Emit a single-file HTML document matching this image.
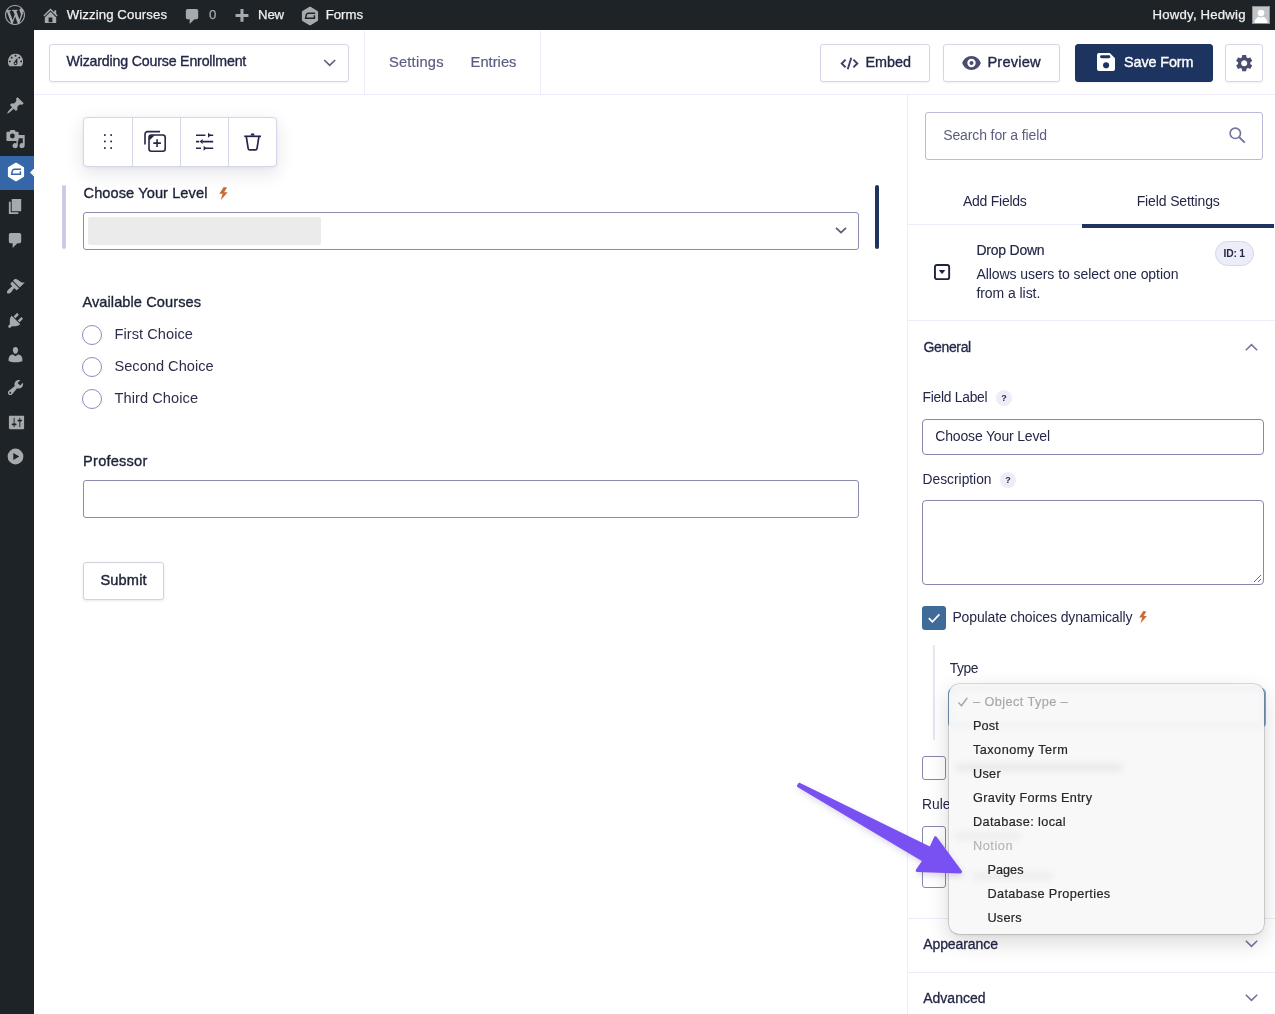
<!DOCTYPE html>
<html lang="en">
<head>
<meta charset="utf-8">
<title>Wizarding Course Enrollment – Gravity Forms</title>
<style>
*{box-sizing:border-box;margin:0;padding:0}
html,body{width:1275px;height:1014px;overflow:hidden;background:#fff}
.t{will-change:transform}
.m{-webkit-text-stroke:.35px}
.m2{-webkit-text-stroke:.2px}
body{font-family:"Liberation Sans",Arial,sans-serif;color:#242748;font-size:14px;position:relative}
.abs{position:absolute}
.t{position:absolute;white-space:nowrap;line-height:1}
/* admin bar */
#adminbar{position:absolute;left:0;top:0;width:1275px;height:30px;background:#1d2327;color:#f0f0f1;z-index:5}
#adminbar .t{font-size:13.2px;color:#f0f0f1;top:7.600px;-webkit-text-stroke:.25px}
/* side menu */
#sidemenu{position:absolute;left:0;top:30px;width:34px;height:984px;background:#1d2327;z-index:4}
#sidemenu .active{position:absolute;left:0;top:126px;width:34px;height:34px;background:#3566a7}
#sidemenu svg{position:absolute}
#toolbar svg{z-index:2}
#toolbar .t{z-index:2}
/* toolbar */
#toolbar{position:absolute;left:34px;top:30px;width:1241px;height:65px;background:#fff;border-bottom:1px solid #ecedf8}
.vsep{position:absolute;top:0;width:1px;height:64px;background:#ecedf8}
.btn{position:absolute;top:14px;height:38px;border:1px solid #d5d7e9;border-radius:3px;background:#fff;box-shadow:0 1px 2px rgba(18,25,97,.06)}
/* editor */
#editor{position:absolute;left:34px;top:95px;width:873px;height:919px;background:#fff}
/* panel */
#panel{position:absolute;left:907px;top:95px;width:368px;height:919px;background:#fff}
#panel .lbl{font-size:14px;line-height:16px;color:#242748}
.q{position:absolute;width:16px;height:16px;border-radius:50%;background:#ecedf8;color:#242748;font-size:9px;font-weight:bold;text-align:center;line-height:16.500px;will-change:transform}
.hline{position:absolute;height:1px;background:#ecedf8}
.inp{position:absolute;border:1px solid #9092b2;border-radius:3px;background:#fff}
</style>
</head>
<body>

<!-- ============ ADMIN BAR ============ -->
<div id="adminbar">
  <svg class="abs" style="left:5px;top:5px" width="20" height="20" viewBox="0 0 20 20"><path fill="#a7aaad" d="M20 10c0-5.51-4.49-10-10-10C4.48 0 0 4.49 0 10c0 5.52 4.48 10 10 10 5.51 0 10-4.48 10-10zM7.78 15.37L4.37 6.22c.55-.02 1.17-.08 1.17-.08.5-.06.44-1.13-.06-1.11 0 0-1.45.11-2.37.11-.18 0-.37 0-.58-.01C4.12 2.69 6.87 1.11 10 1.11c2.33 0 4.45.87 6.05 2.34-.68-.11-1.65.39-1.65 1.58 0 .74.45 1.36.9 2.1.35.61.55 1.36.55 2.46 0 1.49-1.4 5-1.4 5l-3.03-8.37c.54-.02.82-.17.82-.17.5-.05.44-1.25-.06-1.22 0 0-1.44.12-2.38.12-.87 0-2.33-.12-2.33-.12-.5-.03-.56 1.2-.06 1.22l.92.08 1.26 3.41zM17.41 10c.24-.64.74-1.87.43-4.25.7 1.29 1.05 2.71 1.05 4.25 0 3.29-1.73 6.24-4.4 7.78.97-2.59 1.94-5.2 2.92-7.78zM6.1 18.09C3.12 16.650 1.11 13.53 1.11 10c0-1.3.23-2.48.72-3.59C3.25 10.3 4.67 14.2 6.1 18.09zm4.03-6.63l2.58 6.98c-.86.29-1.76.45-2.71.45-.79 0-1.57-.11-2.29-.33.81-2.38 1.62-4.74 2.42-7.1z"/></svg>
  <svg class="abs" style="left:40.5px;top:5.6px" width="19" height="19" viewBox="0 0 20 20"><path fill="#a7aaad" d="M16 8.5l1.53 1.53-1.06 1.06L10 4.620l-6.47 6.47-1.06-1.06L10 2.5l4 4v-2h2v4zm-6-2.46l6 5.99V18H4v-5.970zM12 17v-5H8v5h4z"/></svg>
  <svg class="abs" style="left:182.6px;top:6.6px" width="19" height="19" viewBox="0 0 20 20"><path fill="#a7aaad" d="M5 2h9c1.1 0 2 .9 2 2v7c0 1.1-.9 2-2 2h-2l-5 5v-5H5c-1.1 0-2-.9-2-2V4c0-1.100.9-2 2-2z"/></svg>
  <svg class="abs" style="left:232px;top:7px" width="19" height="19" viewBox="0 0 20 20"><path fill="#a7aaad" d="M17.300 7.300v3.100h-5.200v5.200H8.900v-5.200H3.700V7.300h5.200V2.100h3.200v5.200z"/></svg>
  <svg class="abs" style="left:299.8px;top:4.6px;position:absolute" width="20" height="22" viewBox="-10 -11 20 22"><path d="M0 -8.200L7 -4.100V4.100L0 8.200L-7 4.100V-4.100Z" fill="#a7aaad" stroke="#a7aaad" stroke-width="2.200" stroke-linejoin="round"/><path d="M5.100 -2.700H-1.500Q-3.300 -2.700 -3.700 -1L-4.400 2.200H4.400V-.7" fill="none" stroke="#1d2327" stroke-width="1.450"/></svg>
  <div class="abs" style="left:1252px;top:6px;width:18px;height:18px;background:#c3c4c7;border:1px solid #8c8f94"></div>
  <svg class="abs" style="left:1253px;top:7px" width="16" height="16" viewBox="0 0 16 16"><circle cx="8" cy="6" r="3.300" fill="#fff"/><path d="M1.500 16c.2-3.700 2.400-5.700 4.300-6.200.7.500 1.400.800 2.200.8s1.500-.3 2.200-.8c1.900.5 4.100 2.500 4.300 6.200z" fill="#fff"/></svg>

  <span class="t" style="letter-spacing:0.090px;text-indent:0.80px;left:66px">Wizzing Courses</span>
  <span class="t" style="letter-spacing:0.000px;text-indent:0.00px;left:209px;color:#a7aaad">0</span>
  <span class="t" style="letter-spacing:-0.245px;text-indent:0.11px;left:258px">New</span>
  <span class="t" style="letter-spacing:0.006px;text-indent:0.71px;left:325px">Forms</span>
  <span class="t" style="letter-spacing:0.188px;text-indent:0.61px;left:1152px">Howdy, Hedwig</span>
</div>

<!-- ============ SIDE MENU ============ -->
<div id="sidemenu">
  <div class="active"></div>
  <svg style="left:6.3px;top:20.5px" width="19" height="19" viewBox="0 0 20 20"><path fill="#a7aaad"  d="M3.760 16h12.480A7.998 7.998 0 0 0 10 3a7.998 7.998 0 0 0-6.240 13zM10 4c.55 0 1 .45 1 1s-.45 1-1 1-1-.45-1-1 .45-1 1-1zM6 6c.55 0 1 .45 1 1s-.45 1-1 1-1-.45-1-1 .45-1 1-1zm8 0c.55 0 1 .45 1 1s-.45 1-1 1-1-.45-1-1 .45-1 1-1zm-5.370 5.550L12 7v6c0 1.100-.9 2-2 2s-2-.9-2-2c0-.57.24-1.080.63-1.450zM4 10c.55 0 1 .45 1 1s-.45 1-1 1-1-.45-1-1 .45-1 1-1zm12 0c.55 0 1 .45 1 1s-.45 1-1 1-1-.45-1-1 .45-1 1-1zm-5 3c0-.55-.45-1-1-1s-1 .45-1 1 .45 1 1 1 1-.45 1-1z"/></svg>
  <svg style="left:5.9px;top:65.5px" width="19" height="19" viewBox="0 0 20 20"><path fill="#a7aaad"  d="M10.440 3.020l1.820-1.820 6.360 6.350-1.830 1.820c-1.050-.68-2.480-.57-3.410.36l-.75.75c-.92.93-1.040 2.350-.35 3.410l-1.830 1.820-2.410-2.410-2.800 2.790c-.42.42-3.380 2.710-3.800 2.290s1.860-3.390 2.280-3.810l2.790-2.790L4.100 9.360l1.830-1.820c1.050.69 2.480.57 3.400-.36l.75-.75c.93-.92 1.050-2.350.36-3.410z"/></svg>
  <svg style="left:5px;top:98px" width="22" height="22" viewBox="5 128 22 22"><path fill="#a7aaad" fill-rule="evenodd" d="M7.300 131.800H9.600L10.600 129.900H14.700L15.700 131.800H17.700a.9.9 0 0 1 .9.900V140.100a.9.900 0 0 1-.9.900H7.300a.9.900 0 0 1-.9-.9V132.700a.9.900 0 0 1 .9-.9zM12.400 133.600a2.400 2.400 0 1 0 0 4.800 2.400 2.400 0 0 0 0-4.800zM18.600 135H24.700V145.600a2.600 2.500 0 1 1-1.900-2.400V138.200H18.600zM17.800 141V145.600a2.600 2.500 0 1 1-1.400-2.200V141z"/></svg>
  <svg class="abs" style="left:6px;top:130.7px;position:absolute" width="20" height="22" viewBox="-10 -11 20 22"><path d="M0 -8.200L7 -4.100V4.100L0 8.200L-7 4.100V-4.100Z" fill="#fff" stroke="#fff" stroke-width="2.200" stroke-linejoin="round"/><path d="M5.100 -2.700H-1.500Q-3.300 -2.700 -3.700 -1L-4.400 2.200H4.400V-.7" fill="none" stroke="#3566a7" stroke-width="1.450"/></svg>
  <svg style="left:29.800px;top:138.400px" width="4.200" height="8.800" viewBox="0 0 5 10" preserveAspectRatio="none"><path fill="#f6f6f7" d="M5 0v10L0 5z"/></svg>
  <svg style="left:5.9px;top:167.3px" width="19" height="19" viewBox="0 0 20 20"><path fill="#a7aaad"  d="M6 15V2h10v13H6zm-1 1h8v2H3V5h2v11z"/></svg>
  <svg style="left:5.9px;top:201.1px" width="19" height="19" viewBox="0 0 20 20"><path fill="#a7aaad"  d="M5 2h9c1.100 0 2 .9 2 2v7c0 1.100-.9 2-2 2h-2l-5 5v-5H5c-1.100 0-2-.9-2-2V4c0-1.100.9-2 2-2z"/></svg>
  <svg style="left:5.9px;top:246.5px" width="19" height="19" viewBox="0 0 20 20"><path fill="#a7aaad"  d="M14.480 11.060L7.410 3.990l1.500-1.500c.5-.56 2.300-.47 3.510.32 1.210.8 1.430 1.280 2.910 2.100 1.180.64 2.450 1.260 4.450.85zm-.71.71L6.700 4.700 4.930 6.470c-.39.39-.39 1.020 0 1.410l1.060 1.060c.39.39.39 1.030 0 1.420-.6.6-1.430 1.110-2.210 1.690-.35.26-.7.53-1.010.84C1.430 14.230.4 16.080 1.400 17.070c.99 1 2.840-.03 4.180-1.360.31-.31.58-.66.85-1.020.57-.78 1.080-1.610 1.690-2.210.39-.39 1.020-.39 1.410 0l1.060 1.060c.39.39 1.020.39 1.410 0z"/></svg>
  <svg style="left:6.2px;top:280.8px" width="19" height="19" viewBox="0 0 20 20"><path fill="#a7aaad"  d="M13.110 4.360L9.870 7.600 8 5.730l3.240-3.240c.35-.34 1.050-.2 1.560.32.52.51.66 1.210.31 1.550zm-8 1.770l.91-1.120 9.010 9.010-1.190.84c-.71.71-2.630 1.160-3.820 1.160H6.140L4.900 17.260c-.59.59-1.540.59-2.120 0-.59-.58-.59-1.530 0-2.120l1.240-1.240v-3.880c0-1.130.4-3.190 1.090-3.890zm7.260 3.970l3.240-3.240c.34-.35 1.040-.21 1.550.31.52.51.66 1.210.31 1.550l-3.240 3.250z"/></svg>
  <svg style="left:6.2px;top:314.5px" width="19" height="19" viewBox="0 0 20 20"><path fill="#a7aaad"  d="M10 9.250c-2.270 0-2.730-3.440-2.730-3.440C7 4.020 7.820 2 9.970 2c2.160 0 2.980 2.020 2.710 3.810 0 0-.41 3.440-2.680 3.440zm0 2.570L12.720 10c2.390 0 4.520 2.330 4.520 4.530v2.490s-3.650 1.130-7.240 1.130c-3.650 0-7.240-1.130-7.240-1.130v-2.490c0-2.250 1.940-4.480 4.470-4.480z"/></svg>
  <svg style="left:5.9px;top:348.3px" width="19" height="19" viewBox="0 0 20 20"><path fill="#a7aaad"  d="M16.680 9.770c-1.340 1.340-3.300 1.670-4.950.99l-5.410 6.520c-.99.99-2.590.99-3.580 0s-.99-2.590 0-3.570l6.520-5.420c-.68-1.650-.35-3.610.99-4.950 1.280-1.280 3.120-1.620 4.720-1.060l-2.890 2.890 2.820 2.820 2.860-2.870c.53 1.580.18 3.390-1.080 4.650zM3.810 16.210c.4.39 1.040.39 1.430 0 .4-.4.4-1.040 0-1.430-.39-.4-1.030-.4-1.430 0-.39.39-.39 1.030 0 1.430z"/></svg>
  <svg style="left:6.5px;top:382.5px" width="19" height="19" viewBox="0 0 20 20"><path fill="#a7aaad"  d="M18 16V4c0-.55-.45-1-1-1H3c-.55 0-1 .45-1 1v12c0 .55.45 1 1 1h14c.55 0 1-.45 1-1zM8 11h1c.55 0 1 .45 1 1s-.45 1-1 1H8v1.500c0 .28-.22.5-.5.5s-.5-.22-.5-.5V13H6c-.55 0-1-.45-1-1s.45-1 1-1h1V5.500c0-.28.22-.5.5-.5s.5.220.5.500V11zm5-2h-1c-.55 0-1-.45-1-1s.45-1 1-1h1V5.500c0-.28.22-.5.5-.5s.5.220.5.500V7h1c.55 0 1 .45 1 1s-.45 1-1 1h-1v5.500c0 .28-.22.5-.5.5s-.5-.22-.5-.5V9z"/></svg>
  <svg style="left:6.2px;top:416.5px" width="19" height="19" viewBox="0 0 20 20"><path fill="#a7aaad" fill-rule="evenodd" d="M10 1.700a8.300 8.300 0 1 0 0 16.600 8.300 8.300 0 0 0 0-16.600zM7.700 6.200l6.300 3.800-6.300 3.800z"/></svg>
</div>

<!-- ============ TOOLBAR ============ -->
<div id="toolbar">
  <svg class="abs" style="left:288.100px;top:28.300px" width="15.400" height="9.900" viewBox="0 0 14 9"><path d="M2 1.800L7 6.600l5-4.800" fill="none" stroke="#5b5e80" stroke-width="1.500"/></svg>
  <svg class="abs" style="left:806px;top:27px" width="19" height="13" viewBox="0 0 19 13"><path d="M5.600 2.600L1.700 6.500l3.900 3.900M13.400 2.600l3.900 3.900-3.900 3.900M11.300 .8L7.700 12.200" fill="none" stroke="#3e4163" stroke-width="1.900"/></svg>
  <svg class="abs" style="left:928px;top:26px" width="19" height="14" viewBox="0 0 19 14"><path fill-rule="evenodd" fill="#4a4d70" d="M9.500 0C5 0 1.600 3 .2 7c1.400 4 4.800 7 9.300 7s7.900-3 9.300-7C17.400 3 14 0 9.500 0zm0 11.200a4.200 4.200 0 1 1 0-8.400 4.200 4.200 0 0 1 0 8.400zm0-6.200a2 2 0 1 0 0 4 2 2 0 0 0 0-4z"/></svg>
  <svg class="abs" style="left:1063px;top:23px" width="18" height="18" viewBox="0 0 18 18"><path fill-rule="evenodd" fill="#fff" d="M2 0h10.800L18 5.200V16a2 2 0 0 1-2 2H2a2 2 0 0 1-2-2V2a2 2 0 0 1 2-2zm2.500 2.300a1.450 1.450 0 0 0 0 2.900h7.400a1.450 1.450 0 0 0 0-2.900zM9.100 9.300a3.050 3.050 0 1 0 0 6.100 3.050 3.050 0 0 0 0-6.100z"/></svg>
  <svg class="abs" style="left:1199.800px;top:23.400px" width="20.400" height="20.400" viewBox="0 0 24 24"><path fill="#4a4d70" d="M19.140 12.940c.04-.3.060-.61.060-.94 0-.32-.02-.64-.07-.94l2.030-1.580a.49.490 0 0 0 .12-.61l-1.920-3.320a.488.488 0 0 0-.59-.22l-2.390.96c-.5-.38-1.030-.7-1.620-.94l-.36-2.540a.484.484 0 0 0-.48-.41h-3.840c-.24 0-.43.170-.47.410l-.36 2.540c-.59.240-1.130.57-1.620.94l-2.390-.96c-.22-.08-.47 0-.59.220L2.740 8.870c-.12.210-.08.470.12.610l2.030 1.580c-.05.3-.09.630-.09.940s.02.640.07.940l-2.030 1.580a.49.490 0 0 0-.12.610l1.920 3.320c.12.220.37.290.59.220l2.390-.96c.5.380 1.030.7 1.620.94l.36 2.540c.05.240.24.410.48.410h3.840c.24 0 .44-.17.470-.41l.36-2.540c.59-.24 1.130-.56 1.620-.94l2.390.96c.22.080.47 0 .59-.22l1.920-3.320c.12-.22.070-.47-.12-.61l-2.010-1.580zM12 15.600c-1.980 0-3.600-1.620-3.600-3.600s1.620-3.600 3.600-3.600 3.600 1.620 3.600 3.600-1.620 3.600-3.600 3.600z"/></svg>

  <div class="btn" style="left:15px;width:300px"></div>
  <span class="t m" style="letter-spacing:-0.181px;text-indent:0.50px;left:32px;top:24px;font-size:14.2px">Wizarding Course Enrollment</span>
  <div class="vsep" style="left:330px"></div>
  <span class="t m2" style="letter-spacing:0.217px;text-indent:0.91px;left:354px;top:25px;font-size:14.7px;color:#5b5e80">Settings</span>
  <span class="t m2" style="letter-spacing:0.014px;text-indent:0.61px;left:436px;top:25px;font-size:14.7px;color:#5b5e80">Entries</span>
  <div class="vsep" style="left:506px"></div>
  <div class="btn" style="left:786px;width:110px"></div>
  <span class="t m" style="letter-spacing:-0.002px;text-indent:0.41px;left:831px;top:25px;font-size:14.4px">Embed</span>
  <div class="btn" style="left:908.500px;width:117.500px"></div>
  <span class="t m" style="letter-spacing:0.158px;text-indent:0.41px;left:953px;top:25px;font-size:14.7px">Preview</span>
  <div class="btn" style="left:1041px;width:138px;background:#1d3461;border-color:#1d3461"></div>
  <span class="t m" style="letter-spacing:-0.109px;text-indent:0.00px;left:1090px;top:25px;font-size:14.4px;color:#fff">Save Form</span>
  <div class="btn" style="left:1191px;width:38px"></div>
</div>

<!-- ============ EDITOR ============ -->
<div id="editor">
  <!-- field toolbar (coords relative to editor: x-34, y-95) -->
  <div class="abs" style="left:49px;top:22px;width:194px;height:50px;border:1px solid #d5d7e9;border-radius:4px;background:#fff;box-shadow:0 6px 18px rgba(28,31,63,.12),0 1px 3px rgba(28,31,63,.05)">
    <div class="abs" style="left:48px;top:0;width:1px;height:48px;background:#d5d7e9"></div>
    <div class="abs" style="left:96px;top:0;width:1px;height:48px;background:#d5d7e9"></div>
    <div class="abs" style="left:144px;top:0;width:1px;height:48px;background:#d5d7e9"></div>
    <svg class="abs" style="left:0;top:-.3px" width="192" height="47" viewBox="0 0 192 47">
      <!-- drag dots (origin = 84,118 abs) -->
      <g fill="#242748">
        <rect x="20" y="16.2" width="1.7" height="1.7"/><rect x="26.3" y="16.2" width="1.7" height="1.7"/>
        <rect x="20" y="22.6" width="1.7" height="1.7"/><rect x="26.3" y="22.6" width="1.7" height="1.7"/>
        <rect x="20" y="29.2" width="1.7" height="1.7"/><rect x="26.3" y="29.2" width="1.7" height="1.7"/>
      </g>
      <!-- duplicate -->
      <g fill="none" stroke="#242748" stroke-width="1.6" stroke-linecap="butt">
        <path d="M61 26.5V16.2a2.6 2.6 0 0 1 2.6-2.6H76"/>
        <rect x="65" y="17" width="16.2" height="16.2" rx="2.4"/>
        <path d="M73.1 21.3v7.6M69.3 25.1h7.6"/>
      </g>
      <path d="M65.3 22.5v-3.2a2 2 0 0 1 2-2h3.5z" fill="#242748"/>
      <!-- sliders -->
      <g stroke="#242748" stroke-width="1.6" fill="none">
        <path d="M112 17.3h9.4M126 17.3h3.2"/>
        <path d="M112 23.6h3.2M118.4 23.6h10.8"/>
        <path d="M112 30.2h5M121.6 30.2h7.6"/>
      </g>
      <g fill="#242748">
        <path d="M124 14.8l3 2.5-3 2.5z"/>
        <path d="M118.6 21.1v5l-3-2.5z"/>
        <path d="M119.6 27.7l3 2.5-3 2.5z"/>
      </g>
      <!-- trash -->
      <g fill="none" stroke="#242748" stroke-width="1.7" stroke-linejoin="round">
        <path d="M160.2 18.3h16.8"/>
        <path d="M162.3 18.6l1.9 12a1.6 1.6 0 0 0 1.6 1.3h5.6a1.6 1.6 0 0 0 1.6-1.3l1.9-12"/>
      </g>
      <path d="M166.6 17.6a2 2.3 0 0 1 4 0z" fill="#242748"/>
    </svg>
  </div>

  <!-- selected field -->
  <div class="abs" style="left:28px;top:90px;width:4px;height:64px;border-radius:2px;background:#cbcce4"></div>
  <div class="abs" style="left:840.600px;top:90.400px;width:4.600px;height:63.600px;border-radius:2.500px;background:#1d3461"></div>
  <span class="t" id="lblLevel" style="letter-spacing:0.086px;text-indent:0.50px;left:49px;top:90px;font-size:14.6px;line-height:17px;color:#1c2335;-webkit-text-stroke:.35px #1c2335">Choose Your Level</span>
  <svg class="abs" style="left:184.300px;top:91.500px" width="11" height="13.300" viewBox="0 0 10 14" preserveAspectRatio="none"><path d="M5.2 0L1.2 7.2h3L2.4 14 8.8 5.6H5.6L8.2 0.6z" fill="#cb6a33"/></svg>
  <div class="inp" style="left:49px;top:117px;width:776px;height:38px;border-color:#8b8db0"></div>
  <div class="abs" style="left:54px;top:122px;width:233px;height:28px;border-radius:2px;background:#ebebeb"></div>
  <svg class="abs" style="left:800px;top:131px" width="14" height="9" viewBox="0 0 14 9"><path d="M2 1.8L7 6.6l5-4.8" fill="none" stroke="#5b5e70" stroke-width="1.8"/></svg>

  <!-- radio field -->
  <span class="t" id="lblAvail" style="letter-spacing:0.078px;text-indent:0.41px;left:48px;top:199px;font-size:14.6px;line-height:17px;color:#1c2335;-webkit-text-stroke:.35px #1c2335">Available Courses</span>
  <div class="abs" style="left:48px;top:230px;width:20px;height:20px;border:1px solid #8b8db8;border-radius:50%"></div>
  <div class="abs" style="left:48px;top:262px;width:20px;height:20px;border:1px solid #8b8db8;border-radius:50%"></div>
  <div class="abs" style="left:48px;top:294px;width:20px;height:20px;border:1px solid #8b8db8;border-radius:50%"></div>
  <span class="t" id="c1" style="letter-spacing:0.049px;text-indent:0.50px;left:80px;top:231px;font-size:14.6px;line-height:17px;color:#2b2f4a">First Choice</span>
  <span class="t" id="c2" style="letter-spacing:0.010px;text-indent:0.50px;left:80px;top:263px;font-size:14.6px;line-height:17px;color:#2b2f4a">Second Choice</span>
  <span class="t" id="c3" style="letter-spacing:0.070px;text-indent:0.50px;left:80px;top:295px;font-size:14.6px;line-height:17px;color:#2b2f4a">Third Choice</span>

  <!-- professor -->
  <span class="t" id="lblProf" style="letter-spacing:0.218px;text-indent:0.11px;left:49px;top:358px;font-size:14.6px;line-height:17px;color:#1c2335;-webkit-text-stroke:.35px #1c2335">Professor</span>
  <div class="inp" style="left:49px;top:385px;width:776px;height:38px;border-color:#8b8db0"></div>

  <!-- submit -->
  <div class="abs" style="left:49px;top:467px;width:81px;height:38px;border:1px solid #d0d3dc;border-radius:3px;background:#fff;box-shadow:0 1px 3px rgba(20,25,50,.10)"></div>
  <span class="t" id="lblSubmit" style="letter-spacing:0.156px;text-indent:0.41px;left:66px;top:477px;font-size:14.6px;line-height:17px;color:#1c2335;-webkit-text-stroke:.4px #1c2335">Submit</span>
</div>

<!-- ============ PANEL ============ -->
<div id="panel">
  <div class="abs" style="left:0;top:0;width:1px;height:919px;background:#ecedf8"></div>
  <!-- search -->
  <div class="inp" style="left:18px;top:17px;width:338px;height:48px;border-color:#b9bbd6;border-radius:3px"></div>
  <span class="t lbl" id="pSearch" style="letter-spacing:-0.120px;text-indent:0.21px;left:36px;top:32px;color:#5b5e80">Search for a field</span>
  <svg class="abs" style="left:320.800px;top:31.100px" width="19" height="19" viewBox="0 0 19 19"><circle cx="7.300" cy="7.300" r="5.200" fill="none" stroke="#72759c" stroke-width="1.650"/><path d="M11.200 11.200l5.600 5.400" stroke="#72759c" stroke-width="1.900" fill="none"/></svg>
  <!-- tabs -->
  <span class="t lbl" id="pAdd" style="letter-spacing:-0.262px;text-indent:0.00px;left:56px;top:98px">Add Fields</span>
  <span class="t lbl" id="pFS" style="letter-spacing:-0.133px;text-indent:0.71px;left:229px;top:98px">Field Settings</span>
  <div class="hline" style="left:1px;top:129px;width:367px"></div>
  <div class="abs" style="left:175px;top:129px;width:192px;height:4px;background:#1d3461"></div>
  <!-- field info -->
  <svg class="abs" style="left:26.900px;top:168.800px" width="17" height="17" viewBox="0 0 17 17"><rect x=".950" y=".950" width="14.200" height="14.200" rx="2" fill="none" stroke="#1f2240" stroke-width="1.900"/><path d="M5.500 6.500h5.100L8.050 9.500z" fill="#1f2240" stroke="#1f2240" stroke-width="1" stroke-linejoin="round"/></svg>
  <span class="t lbl" id="pDD" style="letter-spacing:-0.229px;text-indent:0.41px;left:69px;top:147px;-webkit-text-stroke:.2px #242748">Drop Down</span>
  <span class="t lbl" id="pD1" style="letter-spacing:-0.056px;text-indent:0.41px;left:69px;top:171px">Allows users to select one option</span>
  <span class="t lbl" id="pD2" style="letter-spacing:-0.062px;text-indent:0.41px;left:69px;top:190px">from a list.</span>
  <div class="abs" style="left:308px;top:146px;width:39px;height:25px;border-radius:13px;background:#ecedf8;border:1px solid #d5d7e9"></div>
  <span class="t" id="pID" style="letter-spacing:-0.207px;text-indent:0.50px;left:316px;top:154.400px;font-size:10.3px;font-weight:bold;color:#242748">ID: 1</span>
  <div class="hline" style="left:1px;top:225px;width:367px"></div>
  <!-- General -->
  <span class="t lbl" id="pGen" style="letter-spacing:-0.352px;text-indent:0.50px;font-size:14px;left:16px;top:244px;-webkit-text-stroke:.3px #242748">General</span>
  <svg class="abs" style="left:337px;top:247px" width="15" height="10" viewBox="0 0 15 10"><path d="M1.8 8.2L7.5 2.6l5.7 5.6" fill="none" stroke="#7073a0" stroke-width="1.550"/></svg>
  <!-- Field label -->
  <span class="t lbl" id="pFL" style="letter-spacing:-0.250px;text-indent:0.61px;font-size:13.8px;left:15px;top:295px">Field Label</span>
  <div class="q" style="left:89px;top:295px">?</div>
  <div class="inp" style="left:15px;top:324px;width:342px;height:36px;border-color:#8688ab;border-radius:4px"></div>
  <span class="t lbl" id="pCYL" style="letter-spacing:-0.178px;text-indent:0.30px;left:28px;top:333px">Choose Your Level</span>
  <!-- Description -->
  <span class="t lbl" id="pDesc" style="letter-spacing:-0.012px;text-indent:0.61px;font-size:13.8px;left:15px;top:377px">Description</span>
  <div class="q" style="left:93px;top:377px">?</div>
  <div class="inp" style="left:15px;top:405px;width:342px;height:85px;border-color:#8688ab;border-radius:4px"></div>
  <svg class="abs" style="left:346px;top:479px" width="9" height="9" viewBox="0 0 9 9"><path d="M8 1L1 8M8 5L5 8" stroke="#6d6d6d" stroke-width="1" fill="none"/></svg>
  <!-- checkbox -->
  <div class="abs" style="left:15px;top:511px;width:24px;height:24px;border-radius:3px;background:#3e6b9a"></div>
  <svg class="abs" style="left:15px;top:511px" width="24" height="24" viewBox="0 0 24 24"><path d="M6.8 12.2l3.6 3.6 7-7.4" fill="none" stroke="#fff" stroke-width="1.8"/></svg>
  <span class="t lbl" id="pPop" style="letter-spacing:-0.135px;text-indent:0.41px;left:45px;top:514px">Populate choices dynamically</span>
  <svg class="abs" style="left:231.200px;top:516.400px" width="10.100" height="12.600" viewBox="0 0 10 14" preserveAspectRatio="none"><path d="M5.2 0L1.2 7.2h3L2.4 14 8.8 5.6H5.6L8.2 0.6z" fill="#cb6a33"/></svg>
  <!-- type -->
  <div class="abs" style="left:26px;top:550px;width:2px;height:95px;background:#e6e7f4"></div>
  <span class="t lbl" id="pType" style="letter-spacing:-0.407px;text-indent:0.80px;font-size:13.8px;left:42px;top:566px">Type</span>
  <div class="abs" style="left:40.500px;top:592.800px;width:318.200px;height:40.700px;border:2px solid #86a5cc;border-radius:5px;background:#fff"></div>
  <!-- hidden-ish things behind popup -->
  <div class="inp" style="left:15px;top:661px;width:24px;height:24px;border-color:#8688ab;border-radius:3px"></div>
  <span class="t lbl" id="pRule" style="font-size:13.8px;left:15px;top:702px">Rules</span>
  <div class="inp" style="left:15px;top:731px;width:24px;height:24px;border-color:#8688ab;border-radius:3px"></div>
  <div class="inp" style="left:15px;top:769px;width:24px;height:24px;border-color:#8688ab;border-radius:3px"></div>
  <div class="hline" style="left:1px;top:823px;width:367px"></div>
  <span class="t lbl" id="pApp" style="letter-spacing:-0.080px;text-indent:0.21px;font-size:14px;left:16px;top:841px;-webkit-text-stroke:.3px #242748">Appearance</span>
  <svg class="abs" style="left:337px;top:844px" width="15" height="10" viewBox="0 0 15 10"><path d="M1.8 1.8L7.5 7.4l5.7-5.6" fill="none" stroke="#7073a0" stroke-width="1.550"/></svg>
  <div class="hline" style="left:1px;top:877px;width:367px"></div>
  <span class="t lbl" id="pAdv" style="letter-spacing:0.003px;text-indent:0.21px;font-size:14px;left:16px;top:895px;-webkit-text-stroke:.3px #242748">Advanced</span>
  <svg class="abs" style="left:337px;top:898px" width="15" height="10" viewBox="0 0 15 10"><path d="M1.8 1.8L7.5 7.4l5.7-5.6" fill="none" stroke="#7073a0" stroke-width="1.550"/></svg>
</div>

<!-- ============ NATIVE SELECT POPUP ============ -->
<div id="popup" style="position:absolute;left:949px;top:684px;width:315px;height:250px;border-radius:10px;background:#f8f8f8;box-shadow:0 0 0 .5px rgba(0,0,0,.25),0 8px 22px rgba(0,0,0,.16),0 1px 4px rgba(0,0,0,.07);z-index:8;font-size:12.7px;color:#262626">
  
  <div class="abs" style="left:0;top:0;width:315px;height:250px;border-radius:10px;overflow:hidden">
    <div class="abs" style="left:-2px;top:3px;width:318px;height:40px;border-radius:6px;border:3px solid rgba(70,100,160,.07);filter:blur(3px)"></div>
    <div class="abs" style="left:6px;top:79px;width:168px;height:9px;border-radius:4px;background:rgba(60,65,110,.065);filter:blur(3px)"></div>
    <div class="abs" style="left:6px;top:148px;width:66px;height:9px;border-radius:4px;background:rgba(60,65,110,.055);filter:blur(3px)"></div>
    <div class="abs" style="left:24px;top:188px;width:80px;height:9px;border-radius:4px;background:rgba(60,65,110,.055);filter:blur(3px)"></div>
  </div>
  <svg class="abs" style="left:8px;top:11.500px" width="12" height="12" viewBox="0 0 12 12"><path d="M1.500 6.600l3 3.200L10.300 1.800" fill="none" stroke="#a9a9a9" stroke-width="1.500"/></svg>
  <span class="t m2" id="o0" style="letter-spacing:0.440px;text-indent:0.00px;left:24px;top:12px;color:#a8a8a8">– Object Type –</span>
  <span class="t m2" id="o1" style="letter-spacing:0.136px;text-indent:0.00px;left:24px;top:36px">Post</span>
  <span class="t m2" id="o2" style="letter-spacing:0.457px;text-indent:0.00px;left:24px;top:60px">Taxonomy Term</span>
  <span class="t m2" id="o3" style="letter-spacing:0.301px;text-indent:0.00px;left:24px;top:84px">User</span>
  <span class="t m2" id="o4" style="letter-spacing:0.345px;text-indent:0.00px;left:24px;top:108px">Gravity Forms Entry</span>
  <span class="t m2" id="o5" style="letter-spacing:0.367px;text-indent:0.00px;left:24px;top:132px">Database: local</span>
  <span class="t m2" id="o6" style="letter-spacing:0.562px;text-indent:0.00px;left:24px;top:156px;color:#b5b5b5">Notion</span>
  <span class="t m2" id="o7" style="letter-spacing:0.029px;text-indent:0.41px;left:38px;top:180px">Pages</span>
  <span class="t m2" id="o8" style="letter-spacing:0.396px;text-indent:0.41px;left:38px;top:204px">Database Properties</span>
  <span class="t m2" id="o9" style="letter-spacing:0.290px;text-indent:0.41px;left:38px;top:228px">Users</span>
</div>

<!-- ============ ARROW ============ -->
<svg id="arrow" style="position:absolute;left:780px;top:770px;z-index:9;filter:drop-shadow(1px 3px 3px rgba(50,30,120,.17))" width="200" height="120" viewBox="780 770 200 120">
  <path d="M799.4 784.5 L798.6 785.8 L924.3 860.5 L917.4 870.5 L960.4 871.8 L935.5 837.9 L930.6 848.6Z" fill="#7950f2" stroke="#7950f2" stroke-width="3.2" stroke-linejoin="round"/>
</svg>


</body>
</html>
